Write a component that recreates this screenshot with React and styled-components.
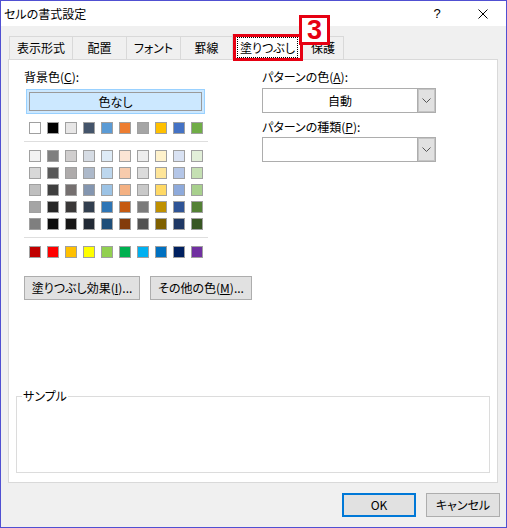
import React from 'react';
import styled, { createGlobalStyle } from 'styled-components';

const GlobalStyle = createGlobalStyle`
  html, body {
    margin: 0;
    padding: 0;
    background: #fff;
  }
  body {
    font-family: "Noto Sans CJK JP", "Noto Sans", sans-serif;
    font-size: 12px;
    color: #000;
  }
  * {
    box-sizing: border-box;
  }
`;

const Window = styled.div`
  width: 507px;
  height: 528px;
  border: 1px solid #5050d2;
  background: #f0f0f0;
  display: flex;
  flex-direction: column;
  font-feature-settings: "palt" 1;
`;

const TitleBar = styled.div`
  height: 25px;
  flex-shrink: 0;
  background: #fff;
  display: flex;
  align-items: center;
  padding-left: 3px;
`;

const Title = styled.div`
  flex: 1;
  line-height: 16px;
`;

const CaptionButton = styled.div`
  width: 46px;
  height: 25px;
  display: flex;
  align-items: center;
  justify-content: center;
  font-family: "Liberation Sans", sans-serif;
  font-size: 13px;
`;

const Body = styled.div`
  flex: 1;
  display: flex;
  flex-direction: column;
  padding-top: 8px;
`;

const TabStrip = styled.div`
  height: 25px;
  display: flex;
  align-items: flex-end;
  padding-left: 8px;
`;

const Tab = styled.div`
  width: ${(p) => p.$w}px;
  height: 23px;
  margin-left: -1px;
  border: 1px solid #d9d9d9;
  border-bottom: none;
  background: #f0f0f0;
  display: flex;
  align-items: center;
  justify-content: center;
  line-height: 16px;

  &:first-child {
    margin-left: 0;
  }
`;

const ActiveTab = styled(Tab)`
  position: relative;
  z-index: 1;
  height: 26px;
  margin-bottom: -1px;
  background: #fff;
  padding: 2px 4px 2px 4px;
  align-items: stretch;
`;

const FocusRing = styled.div`
  flex: 1;
  border: 1px dotted #000;
  display: flex;
  align-items: center;
  justify-content: center;
`;

const RedBox = styled.div`
  position: absolute;
  top: -1px;
  left: 0;
  right: -1px;
  bottom: -1px;
  border: 3px solid #e60012;
  pointer-events: none;
`;

const StepBadge = styled.div`
  position: absolute;
  left: 66px;
  top: -20px;
  width: 31px;
  height: 30px;
  border: 3px solid #e60012;
  background: #fff;
  color: #e60012;
  font-family: "Liberation Sans", sans-serif;
  font-size: 27px;
  font-weight: bold;
  line-height: 24px;
  text-align: center;
`;

const Panel = styled.div`
  flex: 1;
  margin: 0 8px 0 7px;
  border: 1px solid #d9d9d9;
  background: #fff;
  display: flex;
  flex-direction: column;
  padding: 9px 7px 9px 7px;
`;

const Columns = styled.div`
  display: flex;
`;

const LeftCol = styled.div`
  width: 184px;
  flex-shrink: 0;
  margin-left: 8px;
  display: flex;
  flex-direction: column;
`;

const RightCol = styled.div`
  width: 174px;
  flex-shrink: 0;
  margin-left: 54px;
  display: flex;
  flex-direction: column;
`;

const Label = styled.div`
  line-height: 16px;
  height: 16px;
  margin-top: ${(p) => p.$mt || 0}px;
`;

const NoColor = styled.div`
  width: 179px;
  height: 25px;
  margin: 4px 0 0 2px;
  border: 1px solid #99d1ff;
  background: #cce8ff;
  box-shadow: inset 0 0 0 2px #cce8ff, inset 0 0 0 3px #9a9a9a;
  display: flex;
  align-items: center;
  justify-content: center;
`;

const SwatchGrid = styled.div`
  display: grid;
  grid-template-columns: repeat(10, 12px);
  column-gap: 6px;
  row-gap: 5px;
  margin: ${(p) => p.$mt}px 0 0 5px;
`;

const Swatch = styled.div`
  width: 12px;
  height: 12px;
  border: 1px solid #a0a0a0;
  background: ${(p) => p.$c};
`;

const Separator = styled.div`
  height: 1px;
  background: #dedede;
  margin-top: 7px;
`;

const ButtonRow = styled.div`
  display: flex;
  gap: 10px;
  margin-top: 18px;
`;

const PushButton = styled.div`
  width: ${(p) => p.$w}px;
  flex-shrink: 0;
  height: 24px;
  border: ${(p) => (p.$default ? '2px solid #0078d7' : '1px solid #adadad')};
  background: #e1e1e1;
  display: flex;
  align-items: center;
  justify-content: center;
  line-height: 16px;
  white-space: nowrap;
`;

const Select = styled.div`
  height: 25px;
  margin-top: ${(p) => p.$mt}px;
  border: 1px solid #adadad;
  background: #fff;
  display: flex;
`;

const SelectValue = styled.div`
  flex: 1;
  display: flex;
  align-items: center;
  justify-content: center;
  line-height: 16px;
`;

const SelectArrow = styled.div`
  width: 18px;
  background: #e1e1e1;
  border-left: 1px solid #adadad;
  box-shadow: inset 0 0 0 1px #c4c4c4;
  display: flex;
  align-items: center;
  justify-content: center;
`;

const Sample = styled.fieldset`
  margin: auto 0 0 0;
  padding: 0;
  height: 85px;
  border: 1px solid #dcdcdc;
`;

const SampleLegend = styled.legend`
  margin-left: 5px;
  padding: 0 1px;
  line-height: 16px;
`;

const Footer = styled.div`
  height: 44px;
  flex-shrink: 0;
  display: flex;
  justify-content: flex-end;
  gap: 10px;
  padding: 10px 6px 0 0;
`;

const themeRow = ['#ffffff', '#000000', '#e7e6e6', '#44546a', '#5b9bd5', '#ed7d31', '#a5a5a5', '#ffc000', '#4472c4', '#70ad47'];

const tints = [
  ['#f2f2f2', '#7f7f7f', '#d0cece', '#d6dce4', '#deebf6', '#fbe5d5', '#ededed', '#fff2cc', '#d9e2f3', '#e2efd9'],
  ['#d8d8d8', '#595959', '#aeabab', '#adb9ca', '#bdd7ee', '#f7cbac', '#dbdbdb', '#fee599', '#b4c6e7', '#c5e0b3'],
  ['#bfbfbf', '#3f3f3f', '#757070', '#8496b0', '#9cc3e5', '#f4b183', '#c9c9c9', '#ffd965', '#8eaadb', '#a8d08d'],
  ['#a5a5a5', '#262626', '#3a3838', '#323f4f', '#2e75b5', '#c55a11', '#7b7b7b', '#bf9000', '#2f5496', '#538135'],
  ['#7f7f7f', '#0c0c0c', '#171616', '#222a35', '#1e4e79', '#833c0b', '#525252', '#7f6000', '#1f3864', '#375623'],
];

const standard = ['#c00000', '#ff0000', '#ffc000', '#ffff00', '#92d050', '#00b050', '#00b0f0', '#0070c0', '#002060', '#7030a0'];

const tabs = [
  { name: '表示形式', w: 64 },
  { name: '配置', w: 55 },
  { name: 'フォント', w: 55 },
  { name: '罫線', w: 53 },
  { name: '塗りつぶし', w: 71, active: true },
  { name: '保護', w: 42 },
];

const Chevron = () => (
  <svg width="9" height="5" viewBox="0 0 9 5">
    <polyline points="0.5,0.5 4.5,4.5 8.5,0.5" fill="none" stroke="#555" strokeWidth="1" />
  </svg>
);

const CloseIcon = () => (
  <svg width="10" height="10" viewBox="0 0 10 10">
    <path d="M0.5 0.5 L9.5 9.5 M9.5 0.5 L0.5 9.5" stroke="#000" strokeWidth="1" />
  </svg>
);

const App = () => {
  return (
    <>
      <GlobalStyle />
      <Window>
        <TitleBar>
          <Title>セルの書式設定</Title>
          <CaptionButton>?</CaptionButton>
          <CaptionButton>
            <CloseIcon />
          </CaptionButton>
        </TitleBar>
        <Body>
          <TabStrip>
            {tabs.map((t) =>
              t.active ? (
                <ActiveTab key={t.name} $w={t.w}>
                  <FocusRing>{t.name}</FocusRing>
                  <RedBox />
                  <StepBadge>3</StepBadge>
                </ActiveTab>
              ) : (
                <Tab key={t.name} $w={t.w}>
                  {t.name}
                </Tab>
              )
            )}
          </TabStrip>
          <Panel>
            <Columns>
              <LeftCol>
                <Label>
                  背景色(<u>C</u>):
                </Label>
                <NoColor>色なし</NoColor>
                <SwatchGrid $mt={8}>
                  {themeRow.map((c, i) => (
                    <Swatch key={i} $c={c} />
                  ))}
                </SwatchGrid>
                <Separator />
                <SwatchGrid $mt={8}>
                  {tints.flat().map((c, i) => (
                    <Swatch key={i} $c={c} />
                  ))}
                </SwatchGrid>
                <Separator />
                <SwatchGrid $mt={8}>
                  {standard.map((c, i) => (
                    <Swatch key={i} $c={c} />
                  ))}
                </SwatchGrid>
                <ButtonRow>
                  <PushButton $w={116}>
                    塗りつぶし効果(<u>I</u>)...
                  </PushButton>
                  <PushButton $w={102}>
                    その他の色(<u>M</u>)...
                  </PushButton>
                </ButtonRow>
              </LeftCol>
              <RightCol>
                <Label>
                  パターンの色(<u>A</u>):
                </Label>
                <Select $mt={3}>
                  <SelectValue>自動</SelectValue>
                  <SelectArrow>
                    <Chevron />
                  </SelectArrow>
                </Select>
                <Label $mt={6}>
                  パターンの種類(<u>P</u>):
                </Label>
                <Select $mt={2}>
                  <SelectValue />
                  <SelectArrow>
                    <Chevron />
                  </SelectArrow>
                </Select>
              </RightCol>
            </Columns>
            <Sample>
              <SampleLegend>サンプル</SampleLegend>
            </Sample>
          </Panel>
          <Footer>
            <PushButton $w={74} $default>
              OK
            </PushButton>
            <PushButton $w={74}>キャンセル</PushButton>
          </Footer>
        </Body>
      </Window>
    </>
  );
};

export default App;
